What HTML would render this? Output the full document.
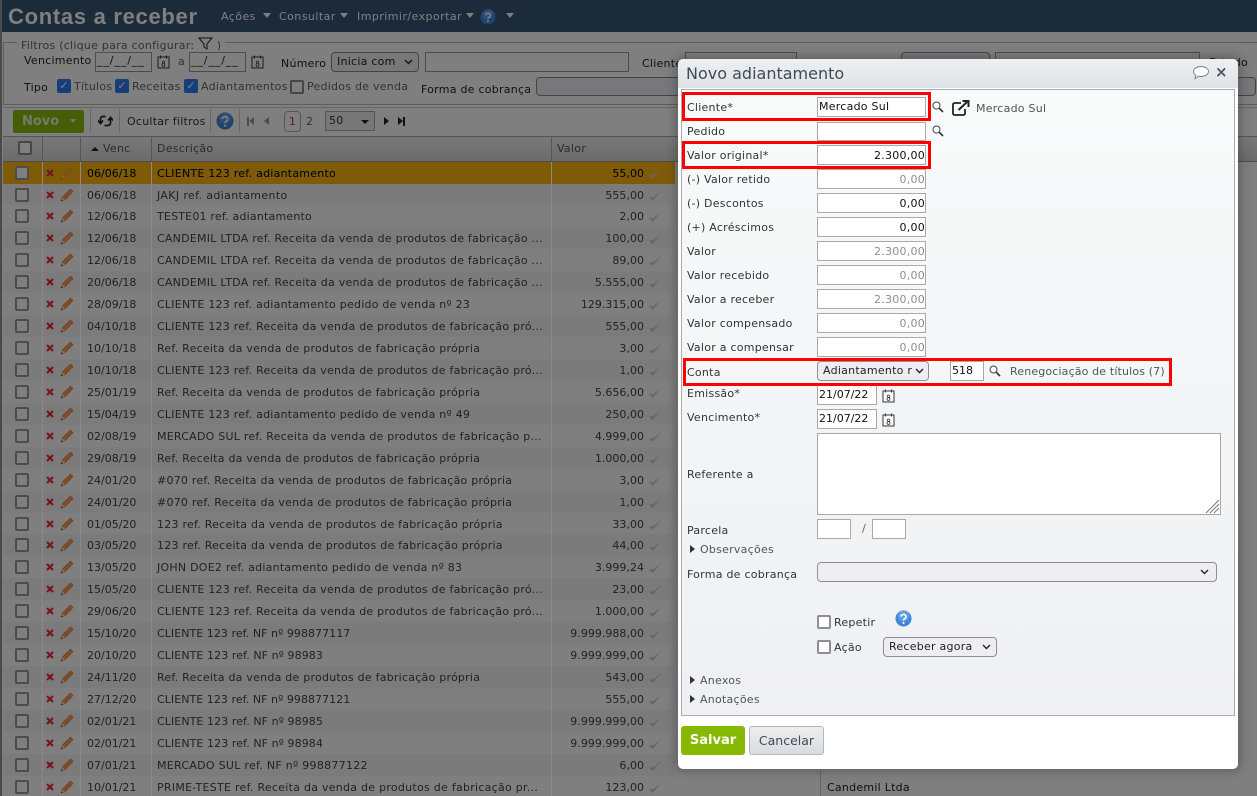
<!DOCTYPE html>
<html lang="pt-BR"><head><meta charset="utf-8"><title>Contas a receber</title>
<style>
*{box-sizing:border-box}
html,body{margin:0;padding:0;width:1257px;height:796px;overflow:hidden;background:#fff}
body{font-family:"DejaVu Sans","Liberation Sans",sans-serif;font-size:11px;letter-spacing:.25px;color:#333;position:relative}
.a,.r>*{position:absolute;white-space:nowrap}
.top{left:0;top:0;width:1257px;height:32px;background:#365674}
.menu{top:10px;color:#fff;font-size:11px;letter-spacing:.45px}
.tri{width:0;height:0;border-left:4px solid transparent;border-right:4px solid transparent;border-top:5px solid #fff}
.inp{background:#fff;border:1px solid #999}
.sel{background:#f1f1f4;border:1px solid #888;border-radius:4px}
.cb{width:14px;height:14px;border:2px solid #8a8a95;border-radius:2px;background:#fff}
.ck{width:14px;height:14px;border-radius:2px;background:#2f7cf0;color:#fff;font-size:11px;line-height:14px;text-align:center;letter-spacing:0}
.r{position:absolute;left:3px;width:672px;height:22px;background:#f6f6f6;color:#444;line-height:23px}
.r.e{background:#fff}
.r.h{background:#ffb70f;color:#000}
.r .d{left:84px;letter-spacing:0}.r .t{left:154px;letter-spacing:.24px}.r .v{right:31px;letter-spacing:.02px}
.r .c{left:12px;top:4px;width:14px;height:14px;border:2px solid #98989f;border-radius:2px;background:#fff}
.r .x{left:43px;top:7px}
.r .p{left:57px;top:4px}
.r .o{left:645px;top:6px}
.sp{position:absolute;top:162px;width:1px;height:634px;background:#8a8a8a}
.ov{left:0;top:0;width:1257px;height:796px;background:rgba(0,0,0,.5)}
.m{left:678px;top:59px;width:560px;height:710px;background:#fff;border-radius:5px;box-shadow:0 0 10px 2px rgba(40,40,40,.4)}
.mt{left:0;top:0;width:560px;height:29px;border-radius:5px 5px 0 0;background:linear-gradient(#edf0f2,#e0e3e6);color:#3f4b57;font-size:16px;letter-spacing:0;line-height:30px;padding-left:8px}
.pn{left:3px;top:30px;width:554px;height:627px;border:1px solid #a8adb3;background:linear-gradient(#f8fafa,#eff0f3)}
.f{position:absolute;white-space:nowrap;color:#333;font-size:11px;line-height:14px}
.in{position:absolute;background:#fff;border:1px solid #a9a9a9;font-size:11px;line-height:18px;height:20px;color:#111;padding:0 1px}
.rt{text-align:right;line-height:20px;padding-right:0}.g{color:#8a8f8a}
.nd{letter-spacing:0}
.rb{position:absolute;border:3px solid #f00}
.lnk{color:#4a5a50}
.sl{position:absolute;background:#eeeef2;border:1px solid #8e8e96;border-radius:4px;height:20px;line-height:18px;padding-left:5px;color:#222;overflow:hidden}
.chev{position:absolute;right:5px;top:5px}
.mb{position:absolute;width:14px;height:14px;border:2px solid #8e8e96;border-radius:2px;background:#fff}
</style></head><body>
<svg width="0" height="0" style="position:absolute"><defs>
<symbol id="pen" viewBox="0 0 14 14"><path d="M1 13 L2.300 9 L10.500 1 L13 3.500 L5 11.700Z" fill="#ff9c50" stroke="#d27030" stroke-width=".6"/><path d="M1 13L2.300 9L5 11.700Z" fill="#f5deb3"/><path d="M1 13l.5-1.600 1.100 1.100z" fill="#222"/></symbol>
<symbol id="xm" viewBox="0 0 8 8"><path d="M1 1L7 7M7 1L1 7" stroke="#f02c3c" stroke-width="2.200"/></symbol>
<symbol id="chk" viewBox="0 0 14 12"><path d="M1 7 L4.500 11 L13 1 L5 7.500Z" fill="#c9cbc9"/></symbol>
<symbol id="cal" viewBox="0 0 13 14"><rect x="1" y="2" width="11" height="11" fill="#fff" stroke="#333"/><path d="M3.500 0.500v3M9.500 .5v3" stroke="#333"/><path d="M6.500 6a1.300 1.300 0 1 0 .01 0M6.500 8.500a1.500 1.500 0 1 0 .01 0" fill="none" stroke="#333" stroke-width=".8"/></symbol>
<symbol id="mag" viewBox="0 0 12 12"><circle cx="4.500" cy="4.500" r="3.500" fill="#fff" stroke="#444" stroke-width="1"/><path d="M7.300 7.300l3.700 3.700" stroke="#333" stroke-width="1.700"/></symbol>
<symbol id="chv" viewBox="0 0 9 6"><path d="M1 1l3.500 3.500L8 1" fill="none" stroke="#222" stroke-width="1.400"/></symbol>
<symbol id="hlp" viewBox="0 0 18 18"><circle cx="9" cy="9" r="8.500" fill="#3f86dc"/><circle cx="9" cy="6" r="6" fill="#7fb4ee" opacity=".5"/><path d="M6.400 7a2.600 2.400 0 1 1 3.800 2.200c-.8.5-1.200.9-1.200 1.800" fill="none" stroke="#fff" stroke-width="1.700"/><circle cx="9" cy="13.600" r="1.100" fill="#fff"/></symbol>
</defs></svg>

<div class="a top"></div>
<div class="a" style="left:8px;top:4px;font:bold 22px 'Liberation Sans',sans-serif;letter-spacing:.7px;color:#fff">Contas a receber</div>
<div class="a menu" style="left:221px">Ações</div><div class="a tri" style="left:263px;top:13px"></div>
<div class="a menu" style="left:279px">Consultar</div><div class="a tri" style="left:340px;top:13px"></div>
<div class="a menu" style="left:357px">Imprimir/exportar</div><div class="a tri" style="left:466px;top:13px"></div>
<svg class="a" style="left:480px;top:9px" width="16" height="16"><use href="#hlp"/></svg>
<div class="a tri" style="left:506px;top:13px"></div>

<div class="a" style="left:3px;top:42px;width:1254px;height:63px;border:1px solid #bbb;border-right:0"></div>
<div class="a" style="left:17px;top:37px;background:#fff;padding:0 4px;color:#666;font-size:11px">Filtros (clique para configurar: <svg width="15" height="13" viewBox="0 0 15 13" style="vertical-align:-1px"><path d="M1 1h13L9 7v5l-3-2V7z" fill="#fff" stroke="#222"/></svg> )</div>
<div class="a" style="left:24px;top:54px;color:#222">Vencimento</div>
<div class="a inp" style="left:95px;top:52px;width:57px;height:20px;color:#222;padding:1px 1px;letter-spacing:.9px">__/__/__</div>
<svg class="a" style="left:157px;top:55px" width="13" height="14"><use href="#cal"/></svg>
<div class="a" style="left:178px;top:55px;color:#666">a</div>
<div class="a inp" style="left:189px;top:52px;width:57px;height:20px;color:#222;padding:1px 1px;letter-spacing:.9px">__/__/__</div>
<svg class="a" style="left:251px;top:55px" width="13" height="14"><use href="#cal"/></svg>
<div class="a" style="left:281px;top:57px;color:#222">Número</div>
<div class="a sel" style="left:331px;top:52px;width:88px;height:20px;padding:2px 5px;color:#222">Inicia com<svg class="chev" style="right:5px;top:6px" width="9" height="6"><use href="#chv"/></svg></div>
<div class="a inp" style="left:425px;top:52px;width:204px;height:20px"></div>
<div class="a" style="left:642px;top:57px;color:#222">Cliente</div>
<div class="a inp" style="left:685px;top:52px;width:112px;height:20px"></div>
<div class="a sel" style="left:901px;top:52px;width:89px;height:20px"></div>
<div class="a inp" style="left:995px;top:52px;width:205px;height:20px"></div>
<div class="a" style="left:1209px;top:56px;color:#222;font-size:11px">Estado</div>
<div class="a" style="left:24px;top:81px;color:#222">Tipo</div>
<div class="a ck" style="left:57px;top:79px">✓</div><div class="a" style="left:74px;top:80px;color:#666">Títulos</div>
<div class="a ck" style="left:115px;top:79px">✓</div><div class="a" style="left:132px;top:80px;color:#666">Receitas</div>
<div class="a ck" style="left:184px;top:79px">✓</div><div class="a" style="left:201px;top:80px;color:#666">Adiantamentos</div>
<div class="a cb" style="left:290px;top:80px"></div><div class="a" style="left:307px;top:80px;color:#666">Pedidos de venda</div>
<div class="a" style="left:421px;top:83px;color:#222">Forma de cobrança</div>
<div class="a sel" style="left:536px;top:77px;width:720px;height:19px"></div>

<div class="a" style="left:3px;top:107px;width:1254px;height:29px;border-top:1px solid #ccc;background:#fff"></div>
<div class="a" style="left:13px;top:110px;width:71px;height:23px;background:#8cbe0f;border-radius:2px;color:#eaf5c8;font-weight:bold;font-size:13px;letter-spacing:0;line-height:23px;padding-left:9px">Novo</div>
<div class="a" style="left:70px;top:119px;border-left:3px solid transparent;border-right:3px solid transparent;border-top:4px solid #e6f0c8"></div>
<div class="a" style="left:90px;top:109px;width:1px;height:24px;background:#ccc"></div>
<svg class="a" style="left:98px;top:114px" width="15" height="14" viewBox="0 0 15 14"><path d="M7.500 2.500H5C3.300 2.500 2.500 3.700 2.500 5v3M0 6.500L2.500 9.500 5 6.500" fill="none" stroke="#222" stroke-width="1.700"/><path d="M6.500 11.500H10c1.700 0 2.500-1.200 2.500-2.500V4.500M10 6.500l2.500-3 2.500 3" fill="none" stroke="#222" stroke-width="1.700"/></svg>
<div class="a" style="left:119px;top:109px;width:1px;height:24px;background:#ccc"></div>
<div class="a" style="left:127px;top:115px;color:#333">Ocultar filtros</div>
<div class="a" style="left:210px;top:109px;width:1px;height:24px;background:#ccc"></div>
<svg class="a" style="left:216px;top:112px" width="18" height="18"><use href="#hlp"/></svg>
<div class="a" style="left:239px;top:109px;width:1px;height:24px;background:#ccc"></div>
<div class="a" style="left:247px;top:117px;width:2px;height:9px;background:#999"></div>
<div class="a" style="left:249px;top:117px;border-right:5px solid #999;border-top:4.500px solid transparent;border-bottom:4.500px solid transparent"></div>
<div class="a" style="left:264px;top:117px;border-right:5px solid #999;border-top:4.500px solid transparent;border-bottom:4.500px solid transparent"></div>
<div class="a" style="left:284px;top:111px;width:17px;height:21px;border:1px solid #aaa;border-radius:4px;text-align:center;line-height:19px;color:#c33;background:#fff">1</div>
<div class="a" style="left:306px;top:115px;color:#666">2</div>
<div class="a" style="left:325px;top:111px;width:50px;height:20px;border:1px solid #aaa;background:#eee;padding:2px 3px;color:#333">50</div>
<div class="a" style="left:361px;top:120px;border-left:4px solid transparent;border-right:4px solid transparent;border-top:4px solid #222"></div>
<div class="a" style="left:384px;top:117px;border-left:5px solid #222;border-top:4.500px solid transparent;border-bottom:4.500px solid transparent"></div>
<div class="a" style="left:398px;top:117px;border-left:5px solid #222;border-top:4.500px solid transparent;border-bottom:4.500px solid transparent"></div>
<div class="a" style="left:403px;top:117px;width:2px;height:9px;background:#222"></div>

<div class="a" style="left:3px;top:136px;width:1254px;height:26px;background:linear-gradient(#f2f2f2,#d6d6d6);border-top:1px solid #aaa;border-bottom:1px solid #999"></div>
<div class="a cb" style="left:18px;top:141px;width:14px;height:14px"></div>
<div class="a" style="left:42px;top:137px;width:1px;height:24px;background:#aaa"></div>
<div class="a" style="left:80px;top:137px;width:1px;height:24px;background:#aaa"></div>
<div class="a" style="left:151px;top:137px;width:1px;height:24px;background:#aaa"></div>
<div class="a" style="left:551px;top:137px;width:1px;height:24px;background:#aaa"></div>
<div class="a" style="left:91px;top:147px;border-left:4px solid transparent;border-right:4px solid transparent;border-bottom:4px solid #222"></div>
<div class="a" style="left:103px;top:142px;color:#556">Venc</div>
<div class="a" style="left:157px;top:142px;color:#556">Descrição</div>
<div class="a" style="left:557px;top:142px;color:#556">Valor</div>

<div class="r h" style="top:162px"><i class="c"></i><svg class="x" width="8" height="8"><use href="#xm"/></svg><svg class="p" width="14" height="14" style="opacity:.45"><use href="#pen"/></svg><span class="d">06/06/18</span><span class="t">CLIENTE 123 ref. adiantamento</span><span class="v">55,00</span><svg class="o" width="14" height="12"><use href="#chk"/></svg></div>
<div class="r" style="top:184px"><i class="c"></i><svg class="x" width="8" height="8"><use href="#xm"/></svg><svg class="p" width="14" height="14"><use href="#pen"/></svg><span class="d">06/06/18</span><span class="t" style="letter-spacing:.36px">JAKJ ref. adiantamento</span><span class="v">555,00</span><svg class="o" width="14" height="12"><use href="#chk"/></svg></div>
<div class="r e" style="top:205px"><i class="c"></i><svg class="x" width="8" height="8"><use href="#xm"/></svg><svg class="p" width="14" height="14"><use href="#pen"/></svg><span class="d">12/06/18</span><span class="t" style="letter-spacing:.2px">TESTE01 ref. adiantamento</span><span class="v">2,00</span><svg class="o" width="14" height="12"><use href="#chk"/></svg></div>
<div class="r" style="top:227px"><i class="c"></i><svg class="x" width="8" height="8"><use href="#xm"/></svg><svg class="p" width="14" height="14"><use href="#pen"/></svg><span class="d">12/06/18</span><span class="t">CANDEMIL LTDA ref. Receita da venda de produtos de fabricação ...</span><span class="v">100,00</span><svg class="o" width="14" height="12"><use href="#chk"/></svg></div>
<div class="r e" style="top:249px"><i class="c"></i><svg class="x" width="8" height="8"><use href="#xm"/></svg><svg class="p" width="14" height="14"><use href="#pen"/></svg><span class="d">12/06/18</span><span class="t">CANDEMIL LTDA ref. Receita da venda de produtos de fabricação ...</span><span class="v">89,00</span><svg class="o" width="14" height="12"><use href="#chk"/></svg></div>
<div class="r" style="top:271px"><i class="c"></i><svg class="x" width="8" height="8"><use href="#xm"/></svg><svg class="p" width="14" height="14"><use href="#pen"/></svg><span class="d">20/06/18</span><span class="t">CANDEMIL LTDA ref. Receita da venda de produtos de fabricação ...</span><span class="v">5.555,00</span><svg class="o" width="14" height="12"><use href="#chk"/></svg></div>
<div class="r e" style="top:293px"><i class="c"></i><svg class="x" width="8" height="8"><use href="#xm"/></svg><svg class="p" width="14" height="14"><use href="#pen"/></svg><span class="d">28/09/18</span><span class="t">CLIENTE 123 ref. adiantamento pedido de venda nº 23</span><span class="v">129.315,00</span><svg class="o" width="14" height="12"><use href="#chk"/></svg></div>
<div class="r" style="top:315px"><i class="c"></i><svg class="x" width="8" height="8"><use href="#xm"/></svg><svg class="p" width="14" height="14"><use href="#pen"/></svg><span class="d">04/10/18</span><span class="t">CLIENTE 123 ref. Receita da venda de produtos de fabricação pró...</span><span class="v">555,00</span><svg class="o" width="14" height="12"><use href="#chk"/></svg></div>
<div class="r e" style="top:337px"><i class="c"></i><svg class="x" width="8" height="8"><use href="#xm"/></svg><svg class="p" width="14" height="14"><use href="#pen"/></svg><span class="d">10/10/18</span><span class="t">Ref. Receita da venda de produtos de fabricação própria</span><span class="v">3,00</span><svg class="o" width="14" height="12"><use href="#chk"/></svg></div>
<div class="r" style="top:359px"><i class="c"></i><svg class="x" width="8" height="8"><use href="#xm"/></svg><svg class="p" width="14" height="14"><use href="#pen"/></svg><span class="d">10/10/18</span><span class="t">CLIENTE 123 ref. Receita da venda de produtos de fabricação pró...</span><span class="v">1,00</span><svg class="o" width="14" height="12"><use href="#chk"/></svg></div>
<div class="r e" style="top:381px"><i class="c"></i><svg class="x" width="8" height="8"><use href="#xm"/></svg><svg class="p" width="14" height="14"><use href="#pen"/></svg><span class="d">25/01/19</span><span class="t">Ref. Receita da venda de produtos de fabricação própria</span><span class="v">5.656,00</span><svg class="o" width="14" height="12"><use href="#chk"/></svg></div>
<div class="r" style="top:403px"><i class="c"></i><svg class="x" width="8" height="8"><use href="#xm"/></svg><svg class="p" width="14" height="14"><use href="#pen"/></svg><span class="d">15/04/19</span><span class="t">CLIENTE 123 ref. adiantamento pedido de venda nº 49</span><span class="v">250,00</span><svg class="o" width="14" height="12"><use href="#chk"/></svg></div>
<div class="r e" style="top:425px"><i class="c"></i><svg class="x" width="8" height="8"><use href="#xm"/></svg><svg class="p" width="14" height="14"><use href="#pen"/></svg><span class="d">02/08/19</span><span class="t">MERCADO SUL ref. Receita da venda de produtos de fabricação p...</span><span class="v">4.999,00</span><svg class="o" width="14" height="12"><use href="#chk"/></svg></div>
<div class="r" style="top:447px"><i class="c"></i><svg class="x" width="8" height="8"><use href="#xm"/></svg><svg class="p" width="14" height="14"><use href="#pen"/></svg><span class="d">29/08/19</span><span class="t">Ref. Receita da venda de produtos de fabricação própria</span><span class="v">1.000,00</span><svg class="o" width="14" height="12"><use href="#chk"/></svg></div>
<div class="r e" style="top:469px"><i class="c"></i><svg class="x" width="8" height="8"><use href="#xm"/></svg><svg class="p" width="14" height="14"><use href="#pen"/></svg><span class="d">24/01/20</span><span class="t">#070 ref. Receita da venda de produtos de fabricação própria</span><span class="v">3,00</span><svg class="o" width="14" height="12"><use href="#chk"/></svg></div>
<div class="r" style="top:491px"><i class="c"></i><svg class="x" width="8" height="8"><use href="#xm"/></svg><svg class="p" width="14" height="14"><use href="#pen"/></svg><span class="d">24/01/20</span><span class="t">#070 ref. Receita da venda de produtos de fabricação própria</span><span class="v">1,00</span><svg class="o" width="14" height="12"><use href="#chk"/></svg></div>
<div class="r e" style="top:513px"><i class="c"></i><svg class="x" width="8" height="8"><use href="#xm"/></svg><svg class="p" width="14" height="14"><use href="#pen"/></svg><span class="d">01/05/20</span><span class="t">123 ref. Receita da venda de produtos de fabricação própria</span><span class="v">33,00</span><svg class="o" width="14" height="12"><use href="#chk"/></svg></div>
<div class="r" style="top:534px"><i class="c"></i><svg class="x" width="8" height="8"><use href="#xm"/></svg><svg class="p" width="14" height="14"><use href="#pen"/></svg><span class="d">03/05/20</span><span class="t">123 ref. Receita da venda de produtos de fabricação própria</span><span class="v">44,00</span><svg class="o" width="14" height="12"><use href="#chk"/></svg></div>
<div class="r e" style="top:556px"><i class="c"></i><svg class="x" width="8" height="8"><use href="#xm"/></svg><svg class="p" width="14" height="14"><use href="#pen"/></svg><span class="d">13/05/20</span><span class="t">JOHN DOE2 ref. adiantamento pedido de venda nº 83</span><span class="v">3.999,24</span><svg class="o" width="14" height="12"><use href="#chk"/></svg></div>
<div class="r" style="top:578px"><i class="c"></i><svg class="x" width="8" height="8"><use href="#xm"/></svg><svg class="p" width="14" height="14"><use href="#pen"/></svg><span class="d">15/05/20</span><span class="t">CLIENTE 123 ref. Receita da venda de produtos de fabricação pró...</span><span class="v">23,00</span><svg class="o" width="14" height="12"><use href="#chk"/></svg></div>
<div class="r e" style="top:600px"><i class="c"></i><svg class="x" width="8" height="8"><use href="#xm"/></svg><svg class="p" width="14" height="14"><use href="#pen"/></svg><span class="d">29/06/20</span><span class="t">CLIENTE 123 ref. Receita da venda de produtos de fabricação pró...</span><span class="v">1.000,00</span><svg class="o" width="14" height="12"><use href="#chk"/></svg></div>
<div class="r" style="top:622px"><i class="c"></i><svg class="x" width="8" height="8"><use href="#xm"/></svg><svg class="p" width="14" height="14"><use href="#pen"/></svg><span class="d">15/10/20</span><span class="t" style="letter-spacing:.05px">CLIENTE 123 ref. NF nº 998877117</span><span class="v">9.999.988,00</span><svg class="o" width="14" height="12"><use href="#chk"/></svg></div>
<div class="r e" style="top:644px"><i class="c"></i><svg class="x" width="8" height="8"><use href="#xm"/></svg><svg class="p" width="14" height="14"><use href="#pen"/></svg><span class="d">20/10/20</span><span class="t" style="letter-spacing:.08px">CLIENTE 123 ref. NF nº 98983</span><span class="v">9.999.999,00</span><svg class="o" width="14" height="12"><use href="#chk"/></svg></div>
<div class="r" style="top:666px"><i class="c"></i><svg class="x" width="8" height="8"><use href="#xm"/></svg><svg class="p" width="14" height="14"><use href="#pen"/></svg><span class="d">24/11/20</span><span class="t">Ref. Receita da venda de produtos de fabricação própria</span><span class="v">543,00</span><svg class="o" width="14" height="12"><use href="#chk"/></svg></div>
<div class="r e" style="top:688px"><i class="c"></i><svg class="x" width="8" height="8"><use href="#xm"/></svg><svg class="p" width="14" height="14"><use href="#pen"/></svg><span class="d">27/12/20</span><span class="t" style="letter-spacing:.05px">CLIENTE 123 ref. NF nº 998877121</span><span class="v">555,00</span><svg class="o" width="14" height="12"><use href="#chk"/></svg></div>
<div class="r" style="top:710px"><i class="c"></i><svg class="x" width="8" height="8"><use href="#xm"/></svg><svg class="p" width="14" height="14"><use href="#pen"/></svg><span class="d">02/01/21</span><span class="t" style="letter-spacing:.08px">CLIENTE 123 ref. NF nº 98985</span><span class="v">9.999.999,00</span><svg class="o" width="14" height="12"><use href="#chk"/></svg></div>
<div class="r e" style="top:732px"><i class="c"></i><svg class="x" width="8" height="8"><use href="#xm"/></svg><svg class="p" width="14" height="14"><use href="#pen"/></svg><span class="d">02/01/21</span><span class="t" style="letter-spacing:.08px">CLIENTE 123 ref. NF nº 98984</span><span class="v">9.999.999,00</span><svg class="o" width="14" height="12"><use href="#chk"/></svg></div>
<div class="r" style="top:754px"><i class="c"></i><svg class="x" width="8" height="8"><use href="#xm"/></svg><svg class="p" width="14" height="14"><use href="#pen"/></svg><span class="d">07/01/21</span><span class="t" style="letter-spacing:.28px">MERCADO SUL ref. NF nº 998877122</span><span class="v">6,00</span><svg class="o" width="14" height="12"><use href="#chk"/></svg></div>
<div class="r e" style="top:776px"><i class="c"></i><svg class="x" width="8" height="8"><use href="#xm"/></svg><svg class="p" width="14" height="14"><use href="#pen"/></svg><span class="d">10/01/21</span><span class="t" style="letter-spacing:.27px">PRIME-TESTE ref. Receita da venda de produtos de fabricação pr...</span><span class="v">123,00</span><svg class="o" width="14" height="12"><use href="#chk"/></svg></div>
<div class="a" style="left:675px;top:162px;width:582px;height:634px;background:#fff"></div>
<div class="a" style="left:820px;top:770px;width:1px;height:26px;background:#ccc"></div>
<div class="a" style="left:827px;top:781px;color:#222">Candemil Ltda</div>

<div class="a ov"></div>
<div class="a" style="left:0;top:0;width:2px;height:796px;background:#4a4a4a"></div>
<div class="sp" style="left:42px"></div>
<div class="sp" style="left:80px"></div>
<div class="sp" style="left:151px"></div>
<div class="sp" style="left:551px"></div>

<div class="a m">
 <div class="a mt">Novo adiantamento</div>
 <svg class="a" style="left:514px;top:6px" width="18" height="15" viewBox="0 0 18 15"><path d="M9 1.500c4.200 0 7.500 2.300 7.500 5s-3.300 5-7.500 5c-.9 0-1.700-.1-2.500-.3L3 13.500l.8-3.300C2.300 9.300 1.500 8 1.500 6.500c0-2.700 3.300-5 7.500-5z" fill="#fff" stroke="#7a838c"/></svg>
 <div class="a" style="left:537px;top:5px;font-size:15px;font-weight:bold;color:#4a5560;line-height:16px">×</div>
 <div class="a pn"></div>
</div>

<div class="f" style="left:687px;top:101px">Cliente*</div>
<div class="in" style="left:817px;top:97px;width:109px">Mercado Sul</div>
<svg class="a" style="left:932px;top:101px" width="12" height="12"><use href="#mag"/></svg>
<svg class="a" style="left:952px;top:100px" width="18" height="16" viewBox="0 0 18 16"><path d="M9 3H2.500C1.700 3 1 3.700 1 4.500v9c0 .8.700 1.500 1.500 1.500h9c.8 0 1.500-.7 1.500-1.500V9" fill="none" stroke="#222" stroke-width="1.800"/><path d="M6.500 10L15 2M10.500 1h6v6" fill="none" stroke="#222" stroke-width="2"/></svg>
<div class="f lnk" style="left:976px;top:102px">Mercado Sul</div>
<div class="f" style="left:687px;top:125px">Pedido</div>
<div class="in" style="left:817px;top:122px;width:109px;height:19px"></div>
<svg class="a" style="left:932px;top:125px" width="12" height="12"><use href="#mag"/></svg>
<div class="f" style="left:687px;top:149px">Valor original*</div>
<div class="in rt" style="left:817px;top:145px;width:109px">2.300,00</div>
<div class="f" style="left:687px;top:173px">(-) Valor retido</div>
<div class="in rt g" style="left:817px;top:169px;width:109px">0,00</div>
<div class="f" style="left:687px;top:197px">(-) Descontos</div>
<div class="in rt" style="left:817px;top:193px;width:109px">0,00</div>
<div class="f" style="left:687px;top:221px">(+) Acréscimos</div>
<div class="in rt" style="left:817px;top:217px;width:109px">0,00</div>
<div class="f" style="left:687px;top:245px">Valor</div>
<div class="in rt g" style="left:817px;top:241px;width:109px">2.300,00</div>
<div class="f" style="left:687px;top:269px">Valor recebido</div>
<div class="in rt g" style="left:817px;top:265px;width:109px">0,00</div>
<div class="f" style="left:687px;top:293px">Valor a receber</div>
<div class="in rt g" style="left:817px;top:289px;width:109px">2.300,00</div>
<div class="f" style="left:687px;top:317px">Valor compensado</div>
<div class="in rt g" style="left:817px;top:313px;width:109px">0,00</div>
<div class="f" style="left:687px;top:341px">Valor a compensar</div>
<div class="in rt g" style="left:817px;top:337px;width:109px">0,00</div>
<div class="f" style="left:687px;top:366px">Conta</div>
<div class="sl" style="left:817px;top:361px;width:112px">Adiantamento r<span style="position:absolute;left:94px;top:0;width:17px;height:18px;background:#eeeef2"></span><svg class="chev" style="right:4px;top:6px" width="9" height="6"><use href="#chv"/></svg></div>
<div class="in nd" style="left:950px;top:361px;width:34px">518</div>
<svg class="a" style="left:989px;top:365px" width="12" height="12"><use href="#mag"/></svg>
<div class="f lnk" style="left:1010px;top:365px;letter-spacing:.15px">Renegociação de títulos (7)</div>
<div class="f" style="left:687px;top:387px">Emissão*</div>
<div class="in nd" style="left:817px;top:385px;width:60px">21/07/22</div>
<svg class="a" style="left:882px;top:389px" width="13" height="14"><use href="#cal"/></svg>
<div class="f" style="left:687px;top:411px">Vencimento*</div>
<div class="in nd" style="left:817px;top:409px;width:60px">21/07/22</div>
<svg class="a" style="left:882px;top:413px" width="13" height="14"><use href="#cal"/></svg>
<div class="in" style="left:817px;top:433px;width:404px;height:82px"></div>
<svg class="a" style="left:1205px;top:499px" width="15" height="15" viewBox="0 0 15 15"><path d="M14 1L1 14M14 5L5 14M14 9L9 14" stroke="#777"/></svg>
<div class="f" style="left:687px;top:468px">Referente a</div>
<div class="f" style="left:687px;top:524px">Parcela</div>
<div class="in" style="left:817px;top:519px;width:34px"></div>
<div class="f" style="left:862px;top:522px;color:#666">/</div>
<div class="in" style="left:872px;top:519px;width:34px"></div>
<div class="a" style="left:690px;top:545px;border-left:5px solid #333;border-top:4px solid transparent;border-bottom:4px solid transparent"></div>
<div class="f lnk" style="left:700px;top:543px">Observações</div>
<div class="f" style="left:687px;top:568px">Forma de cobrança</div>
<div class="sl" style="left:817px;top:562px;width:400px"><svg class="chev" style="right:7px;top:6px" width="9" height="6"><use href="#chv"/></svg></div>
<div class="mb" style="left:817px;top:615px"></div><div class="f" style="left:834px;top:616px">Repetir</div>
<svg class="a" style="left:895px;top:610px" width="17" height="17"><use href="#hlp"/></svg>
<div class="mb" style="left:817px;top:640px"></div><div class="f" style="left:834px;top:641px">Ação</div>
<div class="sl" style="left:883px;top:637px;width:114px">Receber agora<svg class="chev" style="right:5px;top:6px" width="9" height="6"><use href="#chv"/></svg></div>
<div class="a" style="left:690px;top:676px;border-left:5px solid #333;border-top:4px solid transparent;border-bottom:4px solid transparent"></div>
<div class="f lnk" style="left:700px;top:674px">Anexos</div>
<div class="a" style="left:690px;top:695px;border-left:5px solid #333;border-top:4px solid transparent;border-bottom:4px solid transparent"></div>
<div class="f lnk" style="left:700px;top:693px">Anotações</div>

<div class="a" style="left:681px;top:726px;width:64px;height:29px;background:#84b900;border-radius:3px;color:#fff;font:bold 13px/29px 'DejaVu Sans',sans-serif;letter-spacing:0;text-align:center">Salvar</div>
<div class="a" style="left:749px;top:726px;width:75px;height:29px;background:linear-gradient(#eceef0,#d9dcdf);border:1px solid #b3b8bc;border-radius:3px;color:#3f4b57;font-size:12.500px;letter-spacing:0;line-height:27px;text-align:center">Cancelar</div>

<div class="rb" style="left:682px;top:92px;width:249px;height:29px"></div>
<div class="rb" style="left:682px;top:141px;width:249px;height:28px"></div>
<div class="rb" style="left:683px;top:358px;width:489px;height:28px"></div>
</body></html>
